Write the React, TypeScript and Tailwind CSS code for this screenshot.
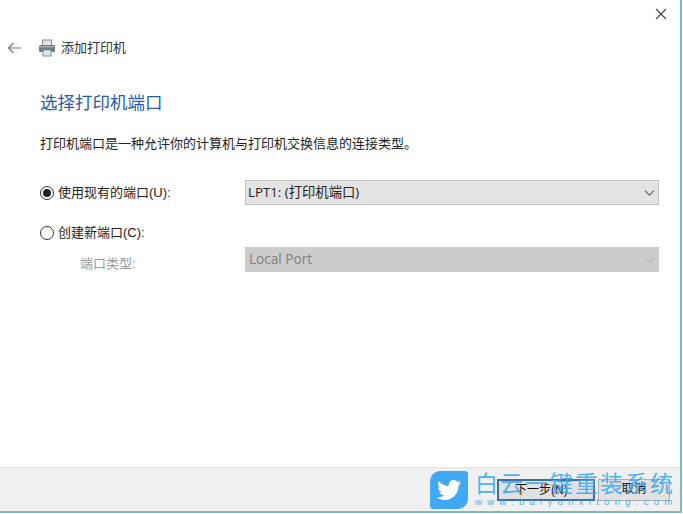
const FONT = "font-['Liberation_Sans','Noto_Sans_CJK_SC',sans-serif]";
const SELECT_FONT = "font-['Open_Sans','Noto_Sans_CJK_SC',sans-serif]";

const Radio = ({ checked }: { checked?: boolean }) => (
  <span className="flex h-[14px] w-[14px] shrink-0 items-center justify-center rounded-full border border-[#333333] bg-white">
    {checked && <span className="h-[8px] w-[8px] rounded-full bg-[#222222]" />}
  </span>
);

const Chevron = ({ color }: { color: string }) => (
  <svg width="11" height="6" viewBox="0 0 11 6" fill="none" stroke={color} strokeWidth="1.2">
    <path d="M1 .6l4.500 4.500L10 .6" />
  </svg>
);

const PrinterIcon = () => (
  <svg width="18" height="18" viewBox="0 0 18 18">
    <rect x="4.500" y="1" width="9" height="6" fill="#e4e4e4" stroke="#8a8a8a" />
    <rect x="1" y="6" width="16" height="7" rx="1.500" fill="#77797c" />
    <rect x="2" y="7" width="14" height="1.500" fill="#a5a7a9" />
    <rect x="5" y="11" width="8" height="6" fill="#dfe9ec" stroke="#5aa0ad" />
  </svg>
);

const TwitterBird = () => (
  <svg width="24" height="20" viewBox="0 0 24 20" fill="#ffffff">
    <path d="M24 2.400c-.9.400-1.800.700-2.800.800 1-.6 1.800-1.600 2.200-2.700-1 .600-2 1-3.100 1.200C19.300.700 18 0 16.600 0c-2.700 0-4.900 2.200-4.900 4.900 0 .400 0 .800.100 1.100C7.700 5.800 4.100 3.900 1.700.900 1.300 1.600 1 2.500 1 3.400c0 1.700.900 3.200 2.200 4.100-.8 0-1.600-.2-2.200-.6v.100c0 2.400 1.700 4.400 3.900 4.800-.4.100-.8.200-1.300.200-.3 0-.6 0-.9-.1.600 2 2.400 3.400 4.600 3.400-1.700 1.300-3.800 2.100-6.100 2.100-.4 0-.8 0-1.200-.1C2.200 19.200 4.800 20 7.500 20c9.100 0 14-7.500 14-14v-.6c1-.7 1.800-1.600 2.500-3z" />
  </svg>
);

export default function App() {
  return (
    <div className={`relative flex h-[514px] w-[683px] flex-col overflow-hidden bg-white ${FONT}`}>
      <div className="flex h-[513px] w-[682px] flex-col border-r-2 border-b-2 border-[#7fbcc0]">
        <div className="flex justify-end pt-[8px] pr-[13px]">
          <svg width="12" height="12" viewBox="0 0 12 12" stroke="#444444" strokeWidth="1.100">
            <path d="M1 1l10 10M11 1L1 11" />
          </svg>
        </div>

        <div className="mt-[19px] flex items-center pl-[7px]">
          <svg width="15" height="12" viewBox="0 0 15 12" fill="none" stroke="#777777" strokeWidth="1.200">
            <path d="M14 6H1.500M6.500 1L1.500 6l5 5" />
          </svg>
          <span className="ml-[16px]">
            <PrinterIcon />
          </span>
          <span className="ml-[5px] text-[13px] leading-[18px] text-[#333333]">添加打印机</span>
        </div>

        <div className="mt-[35px] pl-[40px] text-[17.500px] leading-[22px] text-[#2a5caa]">选择打印机端口</div>
        <div className="mt-[21px] pl-[40px] text-[13px] leading-[18px] text-[#222222]">
          打印机端口是一种允许你的计算机与打印机交换信息的连接类型。
        </div>

        <div className="mt-[27px] flex items-start pl-[40px]">
          <span className="mt-[6px]">
            <Radio checked />
          </span>
          <span className="mt-[4px] ml-[4px] w-[187px] text-[13px] leading-[18px] text-[#222222]">使用现有的端口(U):</span>
          <div className={`flex h-[25px] w-[414px] items-center justify-between border border-[#c4c4c4] bg-[#e3e3e3] pr-[3px] pl-[2px] text-[13.300px] text-[#222222] ${SELECT_FONT}`}>
            <span>LPT1: (打印机端口)</span>
            <Chevron color="#666666" />
          </div>
        </div>

        <div className="mt-[19px] flex items-center pl-[40px]">
          <Radio />
          <span className="ml-[4px] text-[13px] leading-[18px] text-[#222222]">创建新端口(C):</span>
        </div>

        <div className="mt-[5px] flex items-start pl-[80px]">
          <span className="mt-[8px] w-[165px] text-[13px] leading-[18px] text-[#9a9a9a]">端口类型:</span>
          <div className={`flex h-[25px] w-[414px] items-center justify-between bg-[#cccccc] pr-[4px] pl-[4px] text-[13.600px] text-[#808080] ${SELECT_FONT}`}>
            <span>Local Port</span>
            <Chevron color="#b4b4b4" />
          </div>
        </div>

        <div className="mt-auto flex h-[44px] items-center justify-end border-t border-[#e2e2e2] bg-[#f0f0f0] pr-[10px]">
          <div className="flex h-[22px] w-[98px] items-center border-2 border-[#3b6ea5] bg-[#e1e1e1] pl-[16px] text-[12px] text-[#111111]">
            下一步(N)
          </div>
          <div className="ml-[3px] flex h-[22px] w-[72px] items-center justify-center border border-[#adadad] bg-[#e1e1e1] text-[12.500px] text-[#111111]">
            取消
          </div>
        </div>
      </div>

      {/* watermark over the footer */}
      <div className="absolute top-[471px] left-[430px] flex items-start">
        <div className="flex h-[38px] w-[38px] items-center justify-center rounded-tr-[3px] rounded-bl-[3px] rounded-tl-[10px] rounded-br-[10px] bg-[#3fa9f5]">
          <TwitterBird />
        </div>
        <div className="ml-[7px] flex flex-col whitespace-nowrap text-[#3fa9f5]">
          <span className="text-[23px] leading-[26px] tracking-[2px] opacity-90">白云一键重装系统</span>
          <span className="font-['Liberation_Sans',sans-serif] text-[9.500px] leading-[10px] tracking-[5.300px] opacity-90">www.baiyunxitong.com</span>
        </div>
      </div>
    </div>
  );
}
